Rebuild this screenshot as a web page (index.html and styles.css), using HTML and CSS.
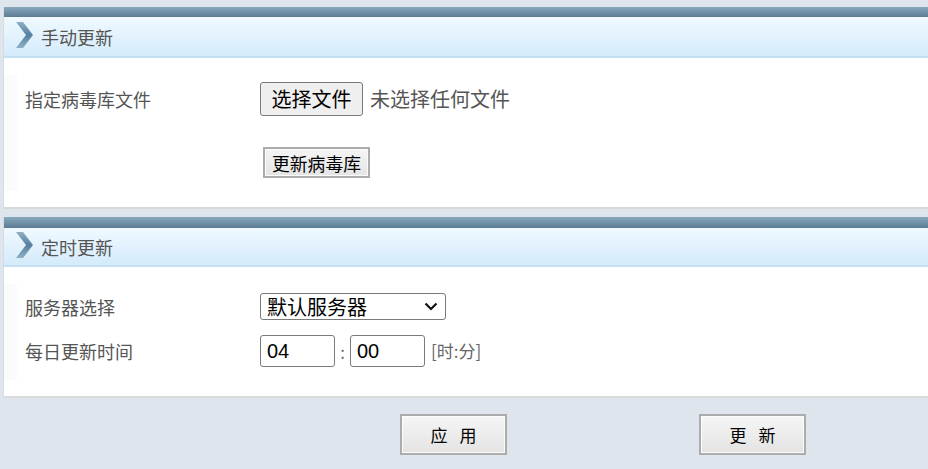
FILE: index.html
```html
<!DOCTYPE html>
<html lang="zh-CN">
<head>
<meta charset="utf-8">
<title>病毒库更新</title>
<link rel="stylesheet" href="styles.css">
</head>
<body>
<div class="page">
  <section class="panel panel-manual">
    <div class="bar"></div>
    <div class="head">
      <svg class="chev" width="18" height="26" viewBox="0 0 18 26">
        <defs>
          <linearGradient id="cg1" x1="0" y1="0" x2="0" y2="1">
            <stop offset="0" stop-color="#8fb0c6"/>
            <stop offset="0.5" stop-color="#56809f"/>
            <stop offset="1" stop-color="#8fb0c6"/>
          </linearGradient>
        </defs>
        <polygon points="0,0 7,0 17,13 7,26 0,26 10,13" fill="url(#cg1)"/>
      </svg>
      <span class="title">手动更新</span>
    </div>
    <div class="body">
      <div class="side"></div>
      <div class="rows">
        <div class="row row-file">
          <span class="label">指定病毒库文件</span>
          <div class="ctrl">
            <button class="file-btn" type="button">选择文件</button>
            <span class="file-none">未选择任何文件</span>
          </div>
        </div>
        <div class="row row-update">
          <span class="label"></span>
          <div class="ctrl">
            <button class="lib-btn" type="button">更新病毒库</button>
          </div>
        </div>
      </div>
    </div>
  </section>

  <section class="panel panel-timer">
    <div class="bar"></div>
    <div class="head">
      <svg class="chev" width="18" height="26" viewBox="0 0 18 26">
        <defs>
          <linearGradient id="cg2" x1="0" y1="0" x2="0" y2="1">
            <stop offset="0" stop-color="#8fb0c6"/>
            <stop offset="0.5" stop-color="#56809f"/>
            <stop offset="1" stop-color="#8fb0c6"/>
          </linearGradient>
        </defs>
        <polygon points="0,0 7,0 17,13 7,26 0,26 10,13" fill="url(#cg2)"/>
      </svg>
      <span class="title">定时更新</span>
    </div>
    <div class="body">
      <div class="side"></div>
      <div class="rows">
        <div class="row row-server">
          <span class="label">服务器选择</span>
          <div class="ctrl">
            <div class="select">
              <span>默认服务器</span>
              <svg class="caret" width="14" height="9" viewBox="0 0 14 9"><path d="M1.5 1.5 L7 7 L12.5 1.5" fill="none" stroke="#111" stroke-width="2.2"/></svg>
            </div>
          </div>
        </div>
        <div class="row row-time">
          <span class="label">每日更新时间</span>
          <div class="ctrl">
            <div class="tbox">04</div>
            <span class="colon">:</span>
            <div class="tbox">00</div>
            <span class="hint">[时:分]</span>
          </div>
        </div>
      </div>
    </div>
  </section>

  <footer class="actions">
    <button class="act" type="button">应 用</button>
    <button class="act" type="button">更 新</button>
  </footer>
</div>
</body>
</html>
```

FILE: styles.css
```css
* { box-sizing: border-box; }

html, body {
  margin: 0;
  padding: 0;
  background: #dee5ec;
  font-family: "Noto Sans CJK SC", "Noto Sans", sans-serif;
}

.page {
  width: 928px;
  height: 469px;
  padding-top: 7px;
  overflow: hidden;
}

.panel {
  margin-left: 3px;
  background: #fff;
  border-left: 1px solid #d9dde2;
  border-bottom: 2px solid #d9d9d9;
}

.panel-timer { margin-top: 8px; }

.bar {
  height: 10px;
  background: linear-gradient(#88a8bd, #5b7c93);
}

.panel-timer .bar { height: 11px; }

.head {
  height: 41px;
  display: flex;
  align-items: center;
  padding-left: 12px;
  background: linear-gradient(#f0f9ff, #d4ebfb);
  border-bottom: 2px solid #c5e0f2;
}

.panel-timer .head { height: 39px; }

.chev { display: block; margin-top: -4px; }

.title {
  margin-left: 7px;
  font-size: 18px;
  line-height: 20px;
  color: #555;
}

.body {
  display: flex;
}

.side {
  width: 13px;
  margin: 17px 0 16px;
  background: #fafbfb;
}

.rows {
  flex: 1;
  display: flex;
  flex-direction: column;
}

.panel-manual .rows { padding: 24px 0 29px 8px; gap: 31px; }
.panel-timer .rows { padding: 26px 0 29px 8px; gap: 15px; }

.row {
  display: flex;
  align-items: center;
}

.label {
  width: 235px;
  font-size: 18px;
  line-height: 20px;
  color: #555;
}

.ctrl {
  display: flex;
  align-items: center;
}

.file-btn {
  width: 103px;
  height: 34px;
  padding: 0;
  border: 1px solid #7a7a7a;
  border-radius: 3px;
  background: #efefef;
  font-family: inherit;
  font-size: 20px;
  line-height: 24px;
  color: #000;
}

.file-none {
  margin-left: 7px;
  font-size: 20px;
  line-height: 24px;
  color: #555;
}

.lib-btn {
  margin-left: 3px;
  width: 107px;
  height: 31px;
  padding: 0;
  border: 2px solid #acacac;
  background: linear-gradient(#f5f5f5, #e4e4e4);
  box-shadow: inset 0 0 0 1px #fbfbfb;
  font-family: inherit;
  font-size: 17.8px;
  line-height: 22px;
  color: #000;
}

.select {
  width: 186px;
  height: 27px;
  display: flex;
  align-items: center;
  justify-content: space-between;
  padding: 0 7px 0 6px;
  border: 1px solid #7a7a7a;
  border-radius: 3px;
  background: #fff;
  font-size: 20px;
  line-height: 24px;
  color: #000;
}

.caret { display: block; }

.tbox {
  width: 75px;
  height: 32px;
  display: flex;
  align-items: center;
  padding-left: 6px;
  border: 1px solid #7a7a7a;
  border-radius: 3px;
  background: #fff;
  font-family: "Liberation Sans", Arial, sans-serif;
  font-size: 20px;
  color: #000;
}

.colon {
  width: 15px;
  text-align: center;
  font-size: 17px;
  color: #666;
}

.hint {
  margin-left: 6px;
  font-size: 17px;
  line-height: 20px;
  color: #666;
}

.actions {
  display: flex;
  gap: 192px;
  padding: 16px 0 0 400px;
}

.act {
  width: 107px;
  height: 41px;
  padding: 0;
  border: 2px solid #acacac;
  background: linear-gradient(#f6f6f6, #e3e3e3);
  box-shadow: inset 0 0 0 1px #fcfcfc;
  font-family: inherit;
  font-size: 17px;
  line-height: 22px;
  word-spacing: 8px;
  color: #000;
}
```
